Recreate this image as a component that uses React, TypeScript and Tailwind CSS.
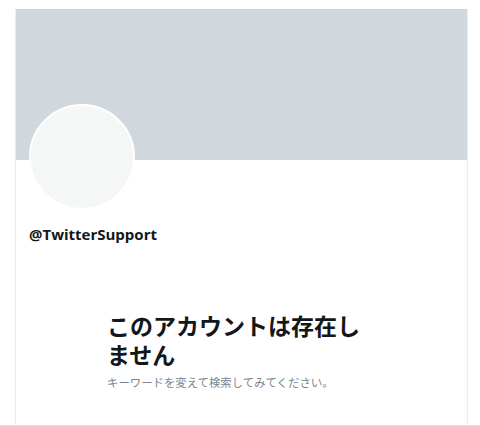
export default function App() {
  const font = { fontFamily: '"Noto Sans CJK JP", "Liberation Sans", sans-serif' };
  return (
    <div className="h-[426px] w-[480px] overflow-hidden border-b border-[#e3e3e3] bg-white">
      <div className="ml-[15px] mt-[9px] h-[417px] w-[453px] border-x border-[#ececec]">
        {/* バナー */}
        <div className="relative h-[151px] bg-[#d0d8de]">
          <div className="absolute left-[13px] top-[95px] size-[106px] rounded-full border-2 border-white bg-[#f5f7f7]" />
        </div>

        <div className="pl-[13px] pt-[64px]">
          <p className="text-[15px] font-bold leading-5 text-[#14171a]" style={{ fontFamily: '"Open Sans", "Liberation Sans", sans-serif' }}>
            @TwitterSupport
          </p>
        </div>

        <div className="ml-[91px] mt-[67px] w-[260px]" style={font}>
          <h1 className="text-[23px] font-bold leading-[29px] text-[#14171a]">このアカウントは存在しません</h1>
          <p className="mt-[5px] text-[11.4px] leading-4 text-[#7b8691]">キーワードを変えて検索してみてください。</p>
        </div>
      </div>
    </div>
  );
}
